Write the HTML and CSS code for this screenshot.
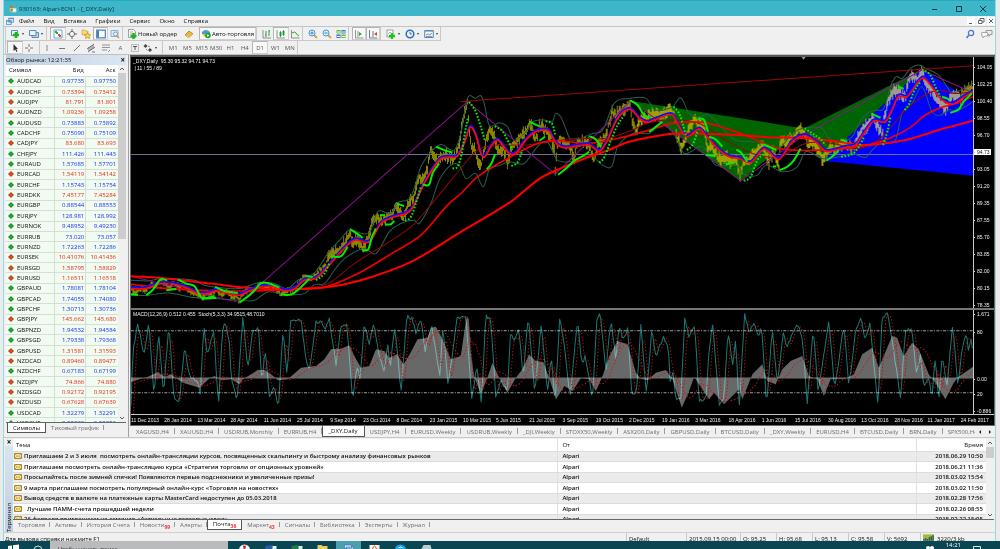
FILE: index.html
```html
<!DOCTYPE html>
<html lang="ru">
<head>
<meta charset="utf-8">
<title>930163: Alpari-ECN1 - [_DXY,Daily]</title>
<link rel="stylesheet" href="styles.css">
</head>
<body>
<svg class="defs" aria-hidden="true">
  <symbol id="mail" viewBox="0 0 8 6"><path d="M.5.5h7v5h-7z" fill="#f6e7a6" stroke="#a8842c"/><path d="M1 1l3 2.500 3-2.500M1 5l2-2M7 5l-2-2" fill="none" stroke="#b8963c" stroke-width=".7"/></symbol>
  <symbol id="app" viewBox="0 0 10 10"><path d="M1 2h4v6H1z" fill="#f0d060"/><path d="M3 4h6v5H3z" fill="#f4f8fb" stroke="#9bb" stroke-width=".6"/><path d="M1 1h4v3H1z" fill="#e06a30"/><path d="M2 5h3v3H2z" fill="#60b040"/></symbol>
  <symbol id="windows" viewBox="0 0 10 10"><path d="M3.500 1.500h6v5h-6zM.5 4.500h6v5h-6z" fill="#dcebf8" stroke="#4a88c0"/><path d="M3 2h7M0 5h7" stroke="#4a88c0"/></symbol>
</svg>
<div class="window">
  <header class="titlebar">
    <svg class="ico"><use href="#app"/></svg>
    <h1>930163: Alpari-ECN1 - [_DXY,Daily]</h1>
    <div class="caption">
      <button aria-label="Свернуть"><svg viewBox="0 0 8 8"><path d="M1 4.500h5"/></svg></button>
      <button aria-label="Развернуть"><svg viewBox="0 0 8 8"><path d="M1.500 1.500h5v5h-5z"/></svg></button>
      <button aria-label="Закрыть"><svg viewBox="0 0 8 8"><path d="M1 1l6 6M7 1l-6 6"/></svg></button>
    </div>
  </header>
  <nav class="menu">
    <svg class="ico"><use href="#windows"/></svg>
    <button>Файл</button><button>Вид</button><button>Вставка</button><button>Графики</button><button>Сервис</button><button>Окно</button><button>Справка</button>
    <div class="mdi">
      <button aria-label="Свернуть окно"><svg viewBox="0 0 8 8"><path d="M2 6.500h3"/></svg></button>
      <button aria-label="Восстановить окно"><svg viewBox="0 0 8 8"><path d="M3 3V1.500h4V5H5M1.500 3.500h3.500v3H1.500z"/></svg></button>
      <button aria-label="Закрыть окно"><svg viewBox="0 0 8 8"><path d="M2 2l4 4M6 2l-4 4"/></svg></button>
    </div>
  </nav>

  <div class="toolbars">
    <div class="bar bar-main">
      <div class="group g-file">
        <button aria-label="Новый график" class="drop"><svg viewBox="0 0 10 10"><path d="M1.500 1.500h6v5h-6z" fill="#e8f1f8" stroke="#5a8cb8"/><path d="M6 3v6M3 6h6" stroke="#18b818" stroke-width="2.600"/></svg></button>
        <button aria-label="Профили" class="drop"><svg viewBox="0 0 10 10"><path d="M3 3.500h6.500v5H3z" fill="#b9d3ea" stroke="#5a8cb8"/><path d="M.5 1.500h6.500v5H.5z" fill="#e8f1f8" stroke="#5a8cb8"/></svg></button>
      </div>
      <div class="group g-views">
        <button aria-label="Обзор рынка" class="on"><svg viewBox="0 0 10 10"><path d="M1 1h8v8H1z" fill="#fff" stroke="#6aa7dc"/><path d="M3 2l2 2-1 1-2-2z" fill="#20b030" stroke="#20b030"/><path d="M6 5l2 2-1 1-2-2z" fill="#e05020" stroke="#e05020"/></svg></button>
        <button aria-label="Окно данных"><svg viewBox="0 0 10 10"><circle cx="5" cy="5" r="2.600" fill="#f4f4f4" stroke="#777"/><path d="M5 0v3M5 7v3M0 5h3M7 5h3" stroke="#666"/></svg></button>
        <button aria-label="Навигатор"><svg viewBox="0 0 10 10"><path d="M1 1h3l1 1h2v4H1z" fill="#f8d878" stroke="#c89830" stroke-width=".6"/><path d="M6.500 3.500l1 2 2.200.3-1.600 1.500.4 2.200-2-1-2 1 .4-2.200-1.600-1.500 2.200-.3z" fill="#ffd83a" stroke="#b08010" stroke-width=".6"/></svg></button>
        <button aria-label="Терминал" class="on"><svg viewBox="0 0 10 10"><path d="M.7 1.200h8.600v7.600H.7z" fill="#fff" stroke="#4a80bc" stroke-width="1.200"/><path d="M1 1.500h2v7H1z" fill="#4a80bc"/></svg></button>
        <button aria-label="Тестер стратегий"><svg viewBox="0 0 10 10"><path d="M1 1.500h7v6H1z" fill="#dceaf5" stroke="#8fb0cc"/><circle cx="5.500" cy="5" r="2" fill="#eef6ff" stroke="#5a8cb8" stroke-width=".8"/><path d="M7 7l2 2" stroke="#d09828" stroke-width="1.500"/></svg></button>
      </div>
      <div class="group g-order">
        <button class="wide"><svg viewBox="0 0 10 10"><path d="M1.500.5h5l2 2v6h-7z" fill="#fff" stroke="#888" stroke-width=".8"/><path d="M3 3h3M3 5h2" stroke="#888" stroke-width=".7"/><path d="M6.500 4v6M3.500 7h6" stroke="#18b818" stroke-width="2.400"/></svg>Новый ордер</button>
        <button aria-label="MetaEditor"><svg viewBox="0 0 10 10"><path d="M1 6l4-4 4 3-4 4z" fill="#e8b840" stroke="#a87818" stroke-width=".8"/><path d="M1.500 6.500L5 9l4-3.500" stroke="#fff0b0" stroke-width=".7" fill="none"/></svg></button>
        <button class="wide on"><svg viewBox="0 0 10 10"><path d="M1 3q4-4 8 0v2H1z" fill="#4a98d8"/><path d="M1 5h8L5 9z" fill="#e8b840"/><circle cx="7" cy="6.500" r="2.800" fill="#18a828"/><path d="M6.200 5l2.200 1.500L6.200 8z" fill="#fff"/></svg>Авто-торговля</button>
      </div>
      <div class="group g-type">
        <button aria-label="Бары"><svg viewBox="0 0 10 10"><path d="M1 1v8h8" fill="none" stroke="#777" stroke-width=".8"/><path d="M4 2v6M3 6h1M7 1v6M7 2h1" stroke="#28a038"/></svg></button>
        <button aria-label="Японские свечи" class="on"><svg viewBox="0 0 10 10"><path d="M1 1v8h8" fill="none" stroke="#777" stroke-width=".8"/><path d="M3.500 3h2v4h-2zM6.500 2h2v4h-2z" fill="#28b838"/><path d="M4.500 2v6M7.500 1v6" stroke="#188028" stroke-width=".7"/></svg></button>
        <button aria-label="Линия"><svg viewBox="0 0 10 10"><path d="M1.500 1v8h8" fill="none" stroke="#777" stroke-width=".8"/><path d="M2 4q3-2 4 0t3 3" fill="none" stroke="#28a038"/></svg></button>
      </div>
      <div class="group g-zoom">
        <button aria-label="Увеличить"><svg viewBox="0 0 10 10"><path d="M6 6l3 3" stroke="#d8a830" stroke-width="2"/><circle cx="4" cy="4" r="3" fill="#d8ecfa" stroke="#4898d0"/><path d="M4 2.500v3M2.500 4h3" stroke="#2868a8" stroke-width=".8"/></svg></button>
        <button aria-label="Уменьшить"><svg viewBox="0 0 10 10"><path d="M6 6l3 3" stroke="#d8a830" stroke-width="2"/><circle cx="4" cy="4" r="3" fill="#d8ecfa" stroke="#4898d0"/><path d="M2.500 4h3" stroke="#2868a8" stroke-width=".8"/></svg></button>
        <button aria-label="Расположить окна"><svg viewBox="0 0 10 10"><path d="M.5 1h4v3.500h-4zM5.500 5.500h4V9h-4z" fill="#68b838"/><path d="M5.500 1h4v3.500h-4zM.5 5.500h4V9h-4z" fill="#3878c8"/><path d="M1 3h3M6 3h3M1 7.500h3M6 7.500h3" stroke="#fff"/></svg></button>
      </div>
      <div class="group g-shift">
        <button aria-label="Автопрокрутка" class="on"><svg viewBox="0 0 10 10"><path d="M1.500 1v8h8M4 2v6" fill="none" stroke="#777" stroke-width=".8"/><path d="M5 3l3 2-3 2z" fill="#28b038"/></svg></button>
        <button aria-label="Сдвиг графика" class="on"><svg viewBox="0 0 10 10"><path d="M1.500 1v8h8M5 2v6" fill="none" stroke="#607080" stroke-width=".9"/><path d="M9 3L6 5l3 2z" fill="#d05028"/></svg></button>
      </div>
      <div class="group g-ind">
        <button aria-label="Индикаторы" class="drop"><svg viewBox="0 0 10 10"><path d="M1 1h6v7H1z" fill="#fff" stroke="#888" stroke-width=".8"/><path d="M2 5l2-2 2 2" fill="none" stroke="#888" stroke-width=".7"/><path d="M6 4v6M3 7h6" stroke="#18c818" stroke-width="2.400"/></svg></button>
        <button aria-label="Периоды" class="drop"><svg viewBox="0 0 10 10"><circle cx="5" cy="5" r="3.800" fill="#e8f2fc" stroke="#2870b8" stroke-width="1.500"/><path d="M5 3v2h2" fill="none" stroke="#555" stroke-width=".8"/></svg></button>
        <button aria-label="Шаблоны" class="drop"><svg viewBox="0 0 10 10"><path d="M.7 1.500h8.600v7H.7z" fill="#eef4f8" stroke="#5888b0"/><path d="M1 2h8" stroke="#5888b0"/><path d="M2 6l2-1 2 1 2-2M2 7.500h6" fill="none" stroke="#669" stroke-width=".7"/></svg></button>
      </div>
      <div class="tools-right">
        <button aria-label="Поиск"><svg viewBox="0 0 10 10"><circle cx="6" cy="4" r="2.600" fill="none" stroke="#4878d0" stroke-width="1.300"/><path d="M4 6L1.500 9" stroke="#4878d0" stroke-width="1.500"/></svg></button>
        <button aria-label="Сообщения"><svg viewBox="0 0 12 10"><path d="M5 1.500h6v4H9l-1 2V5.500H5z" fill="#eee" stroke="#999"/><path d="M.7 3.500h6v3.500H4l-2 2V7H.7z" fill="#f8f8f8" stroke="#999" stroke-width=".8"/></svg></button>
      </div>
    </div>
    <div class="bar bar-lines">
      <div class="group g-cursor">
        <button aria-label="Курсор" class="on"><svg viewBox="0 0 10 10"><path d="M3.500 1v7l1.700-1.600L6.500 9l1-.6-1.200-2.400H8z" fill="#333"/></svg></button>
        <button aria-label="Перекрестие"><svg viewBox="0 0 10 10"><path d="M5 1v3M5 6v3M1 5h3M6 5h3" stroke="#777"/></svg></button>
      </div>
      <div class="group g-draw">
        <button aria-label="Вертикальная линия"><svg viewBox="0 0 10 10"><path d="M5 2v6" stroke="#888"/></svg></button>
        <button aria-label="Горизонтальная линия"><svg viewBox="0 0 10 10"><path d="M2 5.500h6" stroke="#777"/></svg></button>
        <button aria-label="Трендовая линия"><svg viewBox="0 0 10 10"><path d="M2 8l6-6" stroke="#777"/></svg></button>
        <button aria-label="Канал"><svg viewBox="0 0 10 10"><path d="M1 6l7-5M2 9l7-5M3 4v4M5 3v4M7 2v4M6 9h3" stroke="#666" stroke-width=".9"/></svg></button>
        <button aria-label="Фибоначчи"><svg viewBox="0 0 10 10"><path d="M1 2h8M1 4.500h8M1 7h5M7 9l2-2" stroke="#888" stroke-width=".9"/></svg></button>
        <button>A</button>
        <button aria-label="Метка"><svg viewBox="0 0 10 10"><path d="M1.500 1.500h7v7h-7z" fill="none" stroke="#888" stroke-dasharray="1 1"/><path d="M3 3.500h4M5 3.500V7" stroke="#555"/></svg></button>
        <button aria-label="Стрелки" class="drop"><svg viewBox="0 0 10 10"><path d="M2.500 1l2 2-2 2-2-2zM7 5l2 2-2 2-2-2z" fill="#444"/><path d="M3 6l1.500 1.500M5 3l2 1" stroke="#666" stroke-width=".8"/></svg></button>
      </div>
      <div class="group g-tf">
        <button>M1</button><button>M5</button><button>M15</button><button>M30</button><button>H1</button><button>H4</button><button class="on">D1</button><button>W1</button><button>MN</button>
      </div>
    </div>
  </div>

  <main class="work">
    <section class="market">
      <div class="panel-head"><h2>Обзор рынка: 12:21:35</h2><button aria-label="Закрыть">×</button></div>
      <div class="market-body">
        <div class="market-list">
          <table>
            <thead><tr><th>Символ</th><th>Бид</th><th>Аск</th></tr></thead>
            <tbody id="quotes"></tbody>
          </table>
        </div>
        <div class="scroll"><svg viewBox="0 0 6 4"><path d="M1 3l2-2 2 2"/></svg><i></i><svg viewBox="0 0 6 4"><path d="M1 1l2 2 2-2"/></svg></div>
      </div>
      <div class="tabs market-tabs"><button class="cur">Символы</button><button>Тиковый график</button></div>
    </section>

    <section class="charts">
      <div class="chart">
        <div class="pane price">
          <div class="plot">
            <svg id="price" viewBox="9 21 2530 753" preserveAspectRatio="none"></svg>
            <p class="legend">_DXY,Daily&nbsp; 95.30 95.32 94.71 94.73<br>&nbsp;| 11 / 55 / 89</p>
          </div>
          <ol class="scale"><li>104.05</li><li>102.25</li><li>100.40</li><li>98.55</li><li>96.70</li><li class="now">94.73</li><li>93.05</li><li>91.20</li><li>89.35</li><li>87.55</li><li>85.70</li><li>83.85</li><li>82.00</li><li>80.15</li><li>78.35</li></ol>
        </div>
        <div class="pane osc">
          <div class="plot">
            <svg id="osc" viewBox="9 32 2530 311" preserveAspectRatio="none"></svg>
            <p class="legend">MACD(12,26,9) 0.512 0.455&nbsp; Stoch(5,3,3) 34.9515,48.7010</p>
          </div>
          <ol class="scale osc-scale"><li>1.671</li><li>80</li><li>0.00</li><li>20</li><li>-0.886</li></ol>
        </div>
        <ol class="dates"><li>11 Dec 2013</li><li>28 Jan 2014</li><li>13 Mar 2014</li><li>28 Apr 2014</li><li>11 Jun 2014</li><li>25 Jul 2014</li><li>9 Sep 2014</li><li>23 Oct 2014</li><li>8 Dec 2014</li><li>23 Jan 2015</li><li>10 Mar 2015</li><li>5 Jun 2015</li><li>21 Jul 2015</li><li>3 Sep 2015</li><li>19 Oct 2015</li><li>2 Dec 2015</li><li>19 Jan 2016</li><li>3 Mar 2016</li><li>18 Apr 2016</li><li>1 Jun 2016</li><li>15 Jul 2016</li><li>30 Aug 2016</li><li>13 Oct 2016</li><li>28 Nov 2016</li><li>11 Jan 2017</li><li>24 Feb 2017</li></ol>
      </div>
      <div class="tabs chart-tabs">
        <div class="strip"><button>XAGUSD,H4</button><button>XAUUSD,H4</button><button>USDRUB,Monthly</button><button>EURRUB,H4</button><button class="cur">_DXY,Daily</button><button>USDJPY,H4</button><button>EURUSD,Weekly</button><button>USDRUB,Weekly</button><button>_DJI,Weekly</button><button>STOXX50,Weekly</button><button>ASX200,Daily</button><button>GBPUSD,Daily</button><button>BTCUSD,Daily</button><button>_DXY,Weekly</button><button>EURUSD,H4</button><button>BTCUSD,Daily</button><button>BRN,Daily</button><button>SPX500,H4</button></div>
        <div class="arrows"><button aria-label="Назад"><svg viewBox="0 0 6 6"><path d="M4 1v4L2 3z"/></svg></button><button aria-label="Вперёд"><svg viewBox="0 0 6 6"><path d="M2 1v4l2-2z"/></svg></button></div>
      </div>
    </section>
  </main>

  <section class="terminal">
    <div class="side"><button aria-label="Закрыть">×</button><h2>Терминал</h2></div>
    <div class="term-main">
      <div class="mail">
        <div class="mail-list">
          <table>
            <thead><tr><th class="c-subj">Тема</th><th class="c-from">От</th><th class="c-time">Время</th></tr></thead>
            <tbody id="letters"></tbody>
          </table>
        </div>
        <div class="scroll"><svg viewBox="0 0 6 4"><path d="M1 3l2-2 2 2"/></svg><i></i><svg viewBox="0 0 6 4"><path d="M1 1l2 2 2-2"/></svg></div>
      </div>
      <div class="tabs term-tabs"><button>Торговля</button><button>Активы</button><button>История Счета</button><button>Новости<sub>99</sub></button><button>Алерты</button><button class="cur">Почта<sub>36</sub></button><button>Маркет<sub>43</sub></button><button>Сигналы</button><button>Библиотека</button><button>Эксперты</button><button>Журнал</button></div>
    </div>
  </section>

  <footer class="status">
    <span class="hint">Для вызова справки нажмите F1</span>
    <span class="s-prof">Default</span><span class="s-date">2015.09.15 00:00</span><span>O: 95.25</span><span>H: 95.68</span><span>L: 95.13</span><span>C: 95.58</span><span>V: 5692</span>
    <span class="s-net"><svg viewBox="0 0 12 8"><path d="M0 0h12v8H0z" fill="#a8b838"/><path d="M1 7V5M3 7V4M5 7V5M7 7V3M9 7V2M11 7V1" stroke="#285868" stroke-width="1.500"/></svg>3220/3 kb</span>
  </footer>
</div>
<footer class="taskbar">
  <svg class="t-start" viewBox="0 0 12 8"><path d="M1 5l4-.6V8H1zM6 4.200l6-.8V8H6z" fill="#fff"/></svg>
  <svg class="t-start" viewBox="0 0 12 8"><circle cx="6" cy="9" r="4" fill="none" stroke="#cdd"/></svg>
  <label class="t-search"><input type="text" aria-label="Поиск" value="Чтобы начать поиск"></label>
  <div class="t-apps">
    <svg viewBox="0 0 12 8"><circle cx="6" cy="9" r="5.500" fill="#f4f4f4"/><path d="M5 5l1 4 1-4z" fill="#d22" stroke="#d22"/></svg>
    <svg viewBox="0 0 12 8"><path d="M1 5l7-1v4H1z" fill="#2858a8"/><path d="M8 5h4v3H8z" fill="#e8eef8"/></svg>
    <svg viewBox="0 0 12 8"><path d="M1 5l7-1v4H1z" fill="#1f7a44"/><path d="M8 5h4v3H8z" fill="#d8eedd"/></svg>
    <svg viewBox="0 0 12 8"><path d="M1 4h4l1 1h5v3H1z" fill="#f0cc60"/></svg>
    <svg class="act" viewBox="0 0 12 8"><path d="M2 4h7v3H2zM4 6h7v2H4z" fill="#e4eef8" stroke="#3a78b8" stroke-width=".7"/></svg>
    <svg viewBox="0 0 12 8"><path d="M1 4h10v4H1z" fill="#f8f0ea"/><path d="M4 8q2-6 4 0" fill="none" stroke="#e05020"/></svg>
    <svg viewBox="0 0 12 8"><circle cx="6" cy="9" r="5.500" fill="#18a8e8"/><path d="M4 7q2-2 4 0" stroke="#fff" fill="none"/></svg>
    <svg viewBox="0 0 12 8"><path d="M3 4h7l1 4H1z" fill="#b8ccd4"/></svg>
  </div>
  <div class="t-tray"><svg viewBox="0 0 12 8"><circle cx="4" cy="7" r="2" fill="#fff"/><circle cx="8" cy="7" r="2" fill="#fff"/></svg><time>14:21</time><svg viewBox="0 0 12 8"><path d="M2.500 5.500h7V9h-7z" fill="none" stroke="#dee"/></svg></div>
</footer>
<script src="app.js"></script>
</body>
</html>
```
FILE: styles.css
```css
*, *::before, *::after { box-sizing: border-box; }
body { margin: 0; height: 100vh; display: flex; flex-direction: column; overflow: hidden; background: #ebebeb; color: #0c0c0c; font: 6px/8px "Open Sans", "Noto Sans", sans-serif; }
h1, h2, p, ol { margin: 0; padding: 0; font: inherit; list-style: none; }
button { margin: 0; padding: 0; border: 0; background: none; font: inherit; color: inherit; white-space: nowrap; }
svg { display: block; }
table { border-collapse: collapse; table-layout: fixed; width: 100%; }
th, td { padding: 0; font-weight: 400; text-align: left; white-space: nowrap; overflow: hidden; }
.defs { position: absolute; width: 0; height: 0; }

.window { flex: 1; min-height: 0; margin: 0 4px 0 3px; display: flex; flex-direction: column; background: #f0f0f0; border: solid #8edbe6; border-width: 0 1px; }
.ico { width: 8px; height: 8px; }

.titlebar { display: flex; align-items: center; height: 16px; padding-left: 5px; gap: 2px; background: #3cb6c8; border-top: 1px solid #27aabd; color: #0c333a; }
.caption { display: flex; margin-left: auto; }
.caption button { width: 24px; display: flex; justify-content: center; }
.caption svg { width: 8px; height: 8px; fill: none; stroke: #123c44; stroke-width: 1; }

.menu { display: flex; align-items: center; height: 11px; padding-left: 2px; gap: 9px; border-bottom: 1px solid #c4c4c4; }
.menu .ico { margin-right: -4px; }
.mdi { display: flex; gap: 2px; margin-left: auto; }
.mdi button { width: 8px; height: 8px; background: #fff; }
.mdi svg { width: 8px; height: 8px; fill: none; stroke: #567; }

.toolbars { border-bottom: 1px solid #c0c0c0; height: 28px; }
.bar { display: flex; height: 14px; align-items: stretch; }
.bar-lines { height: 13px; }
.group { display: flex; align-items: stretch; padding-left: 3px; border-left: 1px solid #c8c8c8; }
.group button { flex: 1; min-width: 0; display: flex; align-items: center; justify-content: center; color: #555; }
.group button.on { background: #f8f8f8; border: 1px solid #d0d0d0; border-top-color: #b4b4b4; border-left-color: #b4b4b4; }
.group svg, .tools-right svg { width: 10px; height: 10px; flex: none; }
.group .drop::after { content: ""; margin-left: 2px; border: solid transparent; border-top-color: #333; border-width: 2px 1px 0; }
.group button.wide { flex: none; gap: 1px; color: #111; padding: 0 1px; }
.g-file { width: 41px; }
.g-views { width: 76px; }
.g-order { width: 134px; }
.g-type { width: 46px; }
.g-zoom { width: 46px; }
.g-shift { width: 32px; }
.g-ind { width: 61px; border-right: 1px solid #c8c8c8; }
.bar-main .group { border-bottom: 1px solid #c8c8c8; }
.group:first-child { margin-left: 1px; padding-left: 1px; }
.tools-right { display: flex; gap: 6px; align-items: center; margin-left: auto; padding-right: 2px; }
.tools-right button:last-child svg { width: 12px; }
.bar-lines .g-cursor { width: 34px; padding-right: 3px; }
.bar-lines .g-draw { width: 123px; padding: 0 5px 0 0; }
.g-tf { width: 136px; border-right: 1px solid #c8c8c8; }

.work { flex: 1; min-height: 0; display: flex; }
.market { width: 125px; display: flex; flex-direction: column; border-right: 1px solid #a0a0a0; padding: 0 2px 4px 2px; }
.panel-head { display: flex; align-items: center; height: 10px; justify-content: space-between; background: linear-gradient(90deg, #bfd0e2, #dbe6f2); }
.panel-head button { font-size: 8px; font-weight: 700; padding: 0 1px; }
.market-body { flex: 1; min-height: 0; display: flex; background: #fff; }
.market-list { flex: 1; overflow: hidden; height: 100%; }
.market-list table { height: 364px; }
.market-list th { height: 11px; padding: 0 2px 0 3px; }
.market-list th:first-child { width: 48px; }
.market-list th + th, .market-list td + td { text-align: right; }
.market-list tbody tr { background: #effcef; }
.market-list td { padding: 0 1px 0 3px; border: 1px solid #d8ddd8; border-left: 0; }
.market-list td:last-child { border-right-color: #effcef; }
.sym::before { content: ""; display: inline-block; width: 4px; height: 4px; margin-right: 4px; transform: rotate(45deg); background: #2fae3c; border: 1px solid #1c8a2c; }
.down .sym::before { background: #e0582c; border-color: #b8401c; }
.up td + td { color: #1c2cff; }
.down td + td { color: #f02418; }
.scroll { width: 8px; display: flex; flex-direction: column; align-items: center; background: #f0f0f0; padding: 2px 0; }
.scroll svg { width: 6px; height: 4px; fill: none; stroke: #555; }
.scroll i { width: 8px; margin: 2px 0 auto; height: 47%; background: #cdcdcd; }

.tabs { display: flex; align-items: stretch; color: #6c6c6c; }
.tabs button { padding: 0 5px; position: relative; }
.tabs button:not(.cur)::after { content: ""; position: absolute; right: 0; top: 2px; bottom: 3px; border-right: 1px solid #999; }
.tabs .cur { background: #fff; color: #111; border: 1px solid #555; border-top: 0; }
.market-tabs { height: 11px; border-top: 1px solid #666; }
.market-tabs .cur { margin-left: 1px; }

.charts { flex: 1; min-width: 0; display: flex; flex-direction: column; padding-left: 1px; }
.chart { flex: 1; min-height: 0; display: flex; flex-direction: column; background: #000; color: #f0f0f0; border: 1px solid #6a6a6a; border-top: 2px solid #555; font: 5px/6px "Liberation Sans", sans-serif; }
.pane { display: flex; min-height: 0; }
.price { flex: 252; border-bottom: 2px solid #777; }
.osc { flex: 104; }
.plot { flex: 1; min-width: 0; position: relative; border-right: 1px solid #c8c8c8; }
.plot svg { position: absolute; width: 100%; height: 100%; inset: 0; }
.legend { position: absolute; left: 2px; top: 1px; line-height: 7px; }
.scale { width: 20px; display: flex; flex-direction: column; justify-content: space-between; padding: 7px 0 0; }
.scale li { height: 6px; padding-left: 3px; position: relative; }
.scale li::before { content: ""; position: absolute; left: -1px; top: 3px; width: 2px; border-top: 1px solid #c8c8c8; }
.scale .now { background: #fff; color: #111; margin-right: 3px; }
.osc-scale { display: grid; grid-template-rows: 18px 47px 15px 1fr auto; padding: 1px 0 0; }
.dates { display: grid; grid-template-columns: repeat(26, 1fr); height: 11px; padding-top: 2px; border-top: 1px solid #c8c8c8; }
.dates li { white-space: nowrap; position: relative; }
.chart-tabs { height: 11px; }
.strip { flex: 1; min-width: 0; display: flex; overflow: hidden; padding-left: 1px; }
.strip button { flex: none; padding: 0 6px 0 5px; }
.arrows { display: flex; }
.arrows button { padding: 0 2px; }
.arrows button::after { display: none; }
.arrows svg { width: 6px; height: 6px; fill: #222; }

.terminal { height: 95px; display: flex; border-top: 1px solid #c8c8c8; }
.side { width: 8px; margin-left: 1px; display: flex; flex-direction: column; align-items: center; justify-content: space-between; background: linear-gradient(#dbe6f2, #bfd0e2); }
.side button { font-size: 8px; font-weight: 700; background: #f0f0f0; width: 8px; }
.side h2 { writing-mode: vertical-rl; transform: rotate(180deg); }
.term-main { flex: 1; min-width: 0; display: flex; flex-direction: column; padding: 1px 1px 0 0; }
.mail { height: 80px; display: flex; background: #fff; }
.mail-list { flex: 1; min-width: 0; overflow: hidden; }
.mail-list table { height: 86px; }
.mail-list th { height: 12px; border-bottom: 1px solid #ddd; }
.mail-list th + th, .mail-list td + td { border-left: 1px solid #e0e0e0; padding-left: 4px; }
.mail-list th:first-child { padding-left: 3px; }
.mail-list .c-subj { width: 56%; }
.c-time { width: 70px; }
.mail-list td { font-weight: 600; padding-left: 1px; border-bottom: 1px solid #dcdcdc; }
.mail-list td svg { display: inline-block; width: 8px; height: 6px; margin-right: 2px; vertical-align: -1px; }
.mail-list tbody tr:nth-child(odd) { background: #ebebeb; }
.mail-list th:last-child, .mail-list td:last-child { text-align: right; padding-right: 3px; }
.mail .scroll i { height: 11px; }
.term-tabs { height: 11px; border-top: 1px solid #666; }
.term-tabs sub { color: #f03030; font-size: 5px; font-weight: 700; line-height: 1; vertical-align: -2px; }

.status { display: flex; height: 9px; line-height: 12px; overflow: hidden; border-top: 1px solid #d0d0d0; }
.status span { width: 36px; padding-left: 2px; border-left: 1px solid #c8c8c8; white-space: nowrap; }
.status .hint { flex: 1; padding-left: 1px; border: 0; }
.status .s-prof { width: 60px; }
.status .s-date { width: 54px; }
.status .s-net { width: 75px; display: flex; gap: 3px; }
.s-net svg { width: 11px; height: 8px; margin-top: 1px; }

.taskbar { display: flex; height: 8px; background: #0a4652; color: #fff; overflow: hidden; }
.t-start { width: 12px; height: 8px; margin: 0 6px 0 7px; }
.t-search { width: 178px; background: #b9bbbd; }
.t-search input { width: 100%; height: 16px; border: 0; padding: 0 8px; background: none; font: inherit; color: #333; }
.t-apps { display: flex; gap: 1px; padding-left: 4px; }
.t-apps svg { width: 25px; height: 8px; }
.t-apps .act { background: #4aa0ac; }
.t-tray { display: flex; gap: 10px; margin-left: auto; padding-right: 17px; }
.t-tray svg { width: 12px; height: 8px; }

.wave { fill: none; stroke-linejoin: round; }
.glow { mix-blend-mode: screen; }
```
FILE: app.js
```js
const SVG = 'http://www.w3.org/2000/svg';

const quotes = `AUDCAD 0.97735 0.97750 +|AUDCHF 0.73394 0.73412 -|AUDJPY 81.791 81.801 -|AUDNZD 1.09236 1.09258 -|AUDUSD 0.73883 0.73892 +|CADCHF 0.75090 0.75109 +|CADJPY 83.680 83.693 -|CHFJPY 111.426 111.443 +|EURAUD 1.57685 1.57701 +|EURCAD 1.54119 1.54142 -|EURCHF 1.15743 1.15754 +|EURDKK 7.45177 7.45284 -|EURGBP 0.88544 0.88553 +|EURJPY 128.981 128.992 +|EURNOK 9.48952 9.49230 +|EURRUB 73.020 73.057 +|EURNZD 1.72263 1.72286 +|EURSEK 10.41076 10.41436 -|EURSGD 1.58795 1.58829 -|EURUSD 1.16511 1.16518 -|GBPAUD 1.78081 1.78104 +|GBPCAD 1.74055 1.74080 +|GBPCHF 1.30713 1.30736 +|GBPJPY 145.662 145.680 -|GBPNZD 1.94532 1.94584 +|GBPSGD 1.79338 1.79368 +|GBPUSD 1.31581 1.31593 -|NZDCAD 0.89460 0.89477 -|NZDCHF 0.67183 0.67199 +|NZDJPY 74.866 74.880 -|NZDSGD 0.92172 0.92195 -|NZDUSD 0.67628 0.67639 -|USDCAD 1.32279 1.32291 +|USDCHF 0.99330 0.99350 +`;
document.getElementById('quotes').innerHTML = quotes.split('|').map(q => {
  const [s, bid, ask, dir] = q.split(' ');
  return `<tr class="${dir === '+' ? 'up' : 'down'}"><td class="sym">${s}</td><td>${bid}</td><td>${ask}</td></tr>`;
}).join('');

const letters = [
  ['Приглашаем 2 и 3 июля&nbsp; посмотреть онлайн-трансляции курсов, посвященных скальпингу и быстрому анализу финансовых рынков', '2018.06.29 10:50'],
  ['Приглашаем посмотреть онлайн-трансляцию курса «Стратегия торговли от опционных уровней»', '2018.06.21 11:36'],
  ['Просыпайтесь после зимней спячки! Появляются первые подснежники и увеличенные призы!', '2018.03.02 15:54'],
  ['9 марта приглашаем посмотреть популярный онлайн-курс «Торговля на новостях»', '2018.03.02 11:50'],
  ['Вывод средств в валюте на платежные карты MasterCard недоступен до 05.03.2018', '2018.02.28 17:56'],
  ['&nbsp; Лучшие ПАММ-счета прошедшей недели', '2018.02.26 08:55'],
  ['26 февраля приглашаем на семинар «Актуальные торговые идеи»', '2018.02.22 15:05']
];
document.getElementById('letters').innerHTML = letters.map(([t, d]) =>
  `<tr><td><svg><use href="#mail"/></svg>${t}</td><td>Alpari</td><td>${d}</td></tr>`).join('');

/* Series are "x,y x,y ..."; the part after "/" is counted from the second screen of the chart. */
const SECOND = 1236;
function series(text) {
  return text.split('/').flatMap((part, i) =>
    part.trim().split(/\s+/).filter(Boolean).map(p => {
      const [x, y] = p.split(',').map(Number);
      return [x + i * SECOND, y];
    }));
}
let seed = 7;
const rnd = () => (seed = (seed * 16807) % 2147483647) / 2147483647;
function el(parent, tag, attrs) {
  const n = document.createElementNS(SVG, tag);
  for (const k in attrs) n.setAttribute(k, attrs[k]);
  parent.appendChild(n);
  return n;
}
const straight = p => 'M' + p.map(q => q.join(' ')).join('L');
function smooth(p) {
  let d = `M${p[0]}`;
  for (let i = 0; i < p.length - 1; i++) {
    const a = p[i - 1] || p[i], b = p[i], c = p[i + 1], e = p[i + 2] || c;
    const k = (c[0] - b[0]) / 3;
    const s1 = (c[1] - a[1]) / (c[0] - a[0] || 1), s2 = (e[1] - b[1]) / (e[0] - b[0] || 1);
    d += `C${b[0] + k} ${b[1] + s1 * k} ${c[0] - k} ${c[1] - s2 * k} ${c[0]} ${c[1]}`;
  }
  return d;
}
function at(p, x) {
  for (let i = 1; i < p.length; i++) if (x <= p[i][0]) {
    const t = (x - p[i - 1][0]) / (p[i][0] - p[i - 1][0] || 1);
    return p[i - 1][1] + t * (p[i][1] - p[i - 1][1]);
  }
  return p[p.length - 1][1];
}
const line = (root, d, color, w, extra = {}) => el(root, 'path', { d, stroke: color, 'stroke-width': w, class: 'wave', ...extra });

/* Price pane */
const price = document.getElementById('price');
el(price, 'path', { d: straight(series('/272,152 605,392 795,235')) + 'Z' + straight(series('/795,235 850,332 1150,58')) + 'Z', fill: '#006400' });
el(price, 'path', { d: straight(series('/850,332 1150,58 1303,155 1303,377')) + 'Z', fill: '#0000ff' });
line(price, 'M9 313H2540', '#6c7090', 3);

const mid = series(`9,715 20,728 40,712 55,720 70,700 85,708 97,690 115,700 125,712 140,698 155,712 170,705 180,720 195,728 210,735 222,742 235,728 250,732 265,715 280,735 295,725 310,735 325,742 335,752 345,728 360,720 375,722 390,708 400,700 415,712 430,705 445,716 460,730 475,722 490,720 505,710 520,688 535,678 550,684 565,672 580,655 595,645 605,610 620,604 640,602 652,575 665,545 675,580 690,565 705,590 720,570 735,510 750,502 765,515 780,498 795,500 805,465 815,478 830,500 845,450 858,445 865,405 875,380 890,385 900,360 908,300 920,320 935,335 950,315 965,320 980,325 990,300 1000,250 1010,190 1020,160 1023,200 1030,290 1042,300 1052,330 1060,350 1070,310 1078,260 1088,240 1098,250 1108,290 1118,300 1128,300 1140,335 1150,300 1165,280 1180,262 1195,245 1208,222 1220,255 1230,265
 / 0,225 10,230 25,250 35,260 45,300 48,365 55,280 70,270 85,285 105,320 115,275 130,275 150,285 162,330 175,285 185,275 200,255 210,220 218,185 235,190 250,180 265,165 275,160 278,220 292,240 305,210 320,205 340,190 355,195 370,190 390,180 405,190 412,260 425,290 440,260 455,220 465,210 480,220 495,235 505,300 515,285 530,310 545,330 560,320 575,335 590,320 603,380 612,340 625,330 640,320 655,295 670,285 680,310 690,335 702,310 720,350 725,265 740,285 755,265 770,255 783,240 795,245 805,280 820,275 835,290 845,320 855,325 870,290 885,300 900,290 915,285 930,290 945,295 955,270 970,240 985,225 1000,200 1012,225 1025,235 1030,270 1035,210 1050,150 1065,120 1085,130 1100,140 1110,90 1120,75 1135,90 1150,65 1165,105 1180,120 1195,150 1205,155 1220,175 1235,150 1250,130 1265,145 1280,115 1290,115 1303,110`);
const bars = { '#8a8400': '', '#a0a000': '', '#a09a90': '' };
for (let x = 9; x < 2539; x += 3) {
  const amp = x < 600 ? 9 : 17;
  const y = at(mid, x) + (rnd() - .5) * amp;
  const h = amp * (.4 + rnd() * .7);
  const r = x - SECOND;
  const c = r > 950 && r < 1265 ? '#a09a90' : r > 290 && r < 930 ? '#a0a000' : '#8a8400';
  bars[c] += `M${x} ${y - h}V${y + h}`;
}
for (const c in bars) line(price, bars[c], c, 3);

const upper = series(`9,690 60,692 100,685 200,690 230,705 330,715 390,698 440,700 480,715 510,690 560,668 600,610 640,565 665,540 725,548 750,485 790,490 810,458 850,440 880,350 910,305 940,283 980,300 1000,250 1020,145 1045,145 1060,137 1070,160 1085,225 1115,218 1140,230 1160,270 1200,240 1215,215 1250,210 1275,215 1285,190 1300,200 1315,235
 / 95,270 160,250 190,240 225,160 270,145 320,145 350,180 400,170 425,143 450,190 480,200 510,195 550,235 590,270 640,275 680,280 720,295 760,250 800,233 850,235 870,265 900,275 940,260 960,220 985,190 1010,180 1035,175 1055,110 1072,80 1090,85 1115,55 1140,45 1160,55 1200,75 1225,110 1240,130 1303,100`);
const lower = series(`9,735 60,735 120,728 200,742 260,745 335,750 380,750 420,725 470,732 530,730 560,703 590,700 620,660 650,625 710,595 745,610 785,545 820,520 860,510 875,520 910,460 935,390 970,345 995,345 1015,385 1045,370 1068,410 1085,360 1120,345 1145,335 1190,340 1230,290 1260,275 1290,330
 / 104,332 130,320 160,320 190,345 218,348 235,290 280,250 330,250 370,220 410,260 435,310 490,290 530,345 590,345 620,375 655,375 680,345 730,365 775,350 800,305 850,325 900,320 940,310 980,322 1000,300 1030,275 1070,270 1090,190 1120,160 1150,110 1180,185 1205,195 1230,180 1260,180 1303,155`);
line(price, smooth(upper), '#27614d', 3);
line(price, smooth(lower), '#27614d', 3);
line(price, straight(series('9,678 335,757 1020,155 1284,372 / 275,152 605,392 795,255 1150,60 1303,128')), '#8c1090', 3);
line(price, straight(series('1000,155 1060,150 / 1303,47')), '#9a0808', 3);
line(price, smooth(series('520,715 600,700 680,640 850,530 930,440 1000,355 1050,300 1110,285 1200,285 / 100,265 200,265 280,240 330,217 400,210 480,220 560,270 640,310 720,320 800,280 880,280 960,295 1030,260 1100,180 1150,140 1200,120 1250,130 1303,125')), '#900808', 3);
line(price, smooth(series('9,702 120,715 300,722 450,720 540,715 600,708 700,665 800,605 880,555 960,465 1000,430 1050,380 1150,320 1230,280 / 54,272 90,275 150,280 250,262 330,240 400,220 490,217 560,235 630,260 700,290 760,300 850,300 960,290 1050,265 1110,235 1160,195 1200,175 1250,160 1303,140')), '#f00000', 5);
line(price, smooth(series('9,678 100,683 250,700 350,712 450,717 590,712 700,690 850,635 1000,545 1150,455 / 0,386 75,350 150,320 200,303 270,275 380,253 440,250 600,255 700,262 780,263 900,275 980,285 1100,270 1200,240 1303,212')), '#ff0000', 6);

const fast = series(`9,715 50,716 100,700 150,705 180,715 210,730 240,730 265,722 300,730 335,735 370,720 400,710 440,710 470,722 500,716 530,690 565,684 600,650 640,605 680,570 725,575 760,520 800,500 850,480 890,400 935,330 960,322 990,318 1010,280 1028,232 1045,255 1060,310 1072,320 1090,290 1110,270 1125,285 1145,310 1165,310 1195,270 1225,245
 / 12,240 30,245 50,280 75,293 115,288 150,285 180,303 200,280 235,205 272,178 300,205 322,217 350,208 400,195 420,230 443,260 480,237 500,255 540,300 570,320 600,325 635,338 675,297 720,328 760,275 795,257 830,275 860,303 890,300 920,292 950,285 975,250 1005,213 1040,215 1060,180 1078,140 1105,140 1150,85 1175,105 1205,145 1240,163 1270,145 1303,125`);
line(price, smooth(fast.map(([x, y]) => [x, y - 5])), '#1010f0', 6);
line(price, smooth(fast), '#ff0808', 5);

const sar = [
  '9,732 30,734', '55,735 75,718 97,688 118,690', '115,720 145,716', '150,688 175,700 200,708 222,742 260,738', '262,710 290,722 330,728', '222,745 265,743', '335,757 365,735 385,715 400,698 425,700 455,712', '460,733 490,733 515,715 545,685', '535,677 555,680', '565,690 590,670 605,640', '610,618 640,618 660,590', '667,537 685,548 705,563', '705,600 722,597 733,560 745,535', '757,495 772,495', '772,523 790,522 800,512', '808,460 830,468', '832,512 850,500 865,460 880,410', '885,403 905,403 915,370 935,340', '926,290 950,300 975,307', '975,355 990,350 1003,310 1012,250 1022,200', '1025,155 1045,185 1060,230 1072,270', '1078,358 1092,340 1103,312', '1102,228 1125,243 1143,275 1155,300', '1152,348 1172,335 1185,300', '1208,216 1235,228', '1236,272 1253,260', '1255,213 1275,222 1284,255',
  '/56,374 80,355 105,332 130,318 150,305', '/150,258 170,268 185,290', '/180,338 195,322 215,270 235,225 255,195', '/272,151 295,165 315,195 335,203', '/330,246 350,230 370,215', '/403,170 420,190 432,225 440,255', '/443,300 460,285 475,245', '/475,206 495,210 507,245', '/510,260 530,268 550,290', '/500,315 530,318', '/560,343 585,338', '/592,298 608,310 625,335', '/614,392 635,380 655,330 675,312', '/672,282 695,292 712,300', '/702,349 712,349', '/722,360 745,350 765,330 785,295', '/797,235 820,250 845,268 860,285', '/862,332 885,315 900,300', '/905,268 925,275', '/907,320 940,312 960,290 975,262', '/1000,192 1025,203', '/1033,285 1047,240 1055,200', '/1078,110 1095,116', '/1098,180 1112,160 1125,125 1145,95', '/1150,58 1175,75 1190,110 1205,140', '/1210,140 1232,148', '/1235,188 1260,178 1275,155 1300,130'
];
const dotted = new Set([9, 16, 19, 20, 22, 23, 26, 29, 32, 33, 39, 43, 46, 48, 50, 51]);
sar.forEach((s, i) => line(price, smooth(series(s)), '#00f000', 6, dotted.has(i) ? { 'stroke-dasharray': '5 5' } : {}));
el(price, 'path', { d: 'M2024 21h12l-6 8z', fill: '#8a9ab0' });

/* Oscillator pane */
const osc = document.getElementById('osc');
line(osc, 'M9 94H2540M9 280H2540', '#a0a0a0', 3, { 'stroke-dasharray': '9 4 3 4' });
const macd = series(`9,248 35,240 60,232 90,218 110,232 130,225 145,237 165,250 215,265 245,237 260,230 280,243 310,240 335,255 345,240 390,212 410,212 430,225 450,243 480,240 520,205 565,200 590,180 610,150 640,148 665,138 680,170 700,205 725,200 745,150 770,155 785,175 808,165 828,195 845,168 870,120 900,115 912,85 925,82 945,120 970,180 1000,170 1010,100 1018,50 1024,60 1030,160 1040,230 1060,285 1080,235 1095,190 1110,225 1140,280 1165,236 1185,210 1205,165 1225,185
 / 12,188 29,235 50,300 75,260 100,275 125,236 150,240 170,275 190,230 210,170 235,125 265,135 290,220 305,238 325,243 350,220 380,212 400,240 428,325 450,275 465,233 510,300 525,280 555,315 600,270 610,300 640,225 670,195 685,245 710,255 730,210 755,185 790,170 810,230 835,240 855,290 875,240 920,238 945,225 970,165 1000,145 1020,205 1060,110 1075,115 1095,170 1120,130 1140,150 1170,225 1190,250 1220,300 1245,250 1260,232 1303,202`);
el(osc, 'path', { d: `M9 236L${macd.map(q => q.join(' ')).join('L')}L2539 236Z`, fill: '#686868' });
line(osc, 'M9 236H2540', '#707070', 3);

const peaks = series(`9,320 15,150 30,75 48,170 63,68 78,290 92,100 107,280 123,75 138,300 155,300 170,140 185,230 205,240 217,280 228,80 238,165 258,95 272,325 283,100 292,68 305,130 310,240 328,300 345,50 360,210 375,90 392,90 403,260 411,145 425,290 438,260 452,320 466,90 478,230 488,70 520,60 535,185 545,210 565,70 580,65 590,90 605,60 625,195 640,75 658,80 675,300 688,200 697,240 710,75 725,130 738,70 755,170 770,215 780,130 787,210 802,80 820,280 838,50 855,60 865,100 880,60 893,155 912,80 937,225 946,80 962,260 988,60 1015,48 1033,300 1048,200 1062,310 1075,50 1090,60 1105,290 1120,240 1140,280 1150,90 1160,130 1175,90 1187,240 1203,45 1222,285
 / 6,75 24,280 36,170 47,315 61,60 75,130 92,300 115,60 128,195 138,170 160,300 173,60 183,45 200,215 215,60 230,180 240,80 250,120 265,90 278,285 292,280 305,75 322,285 338,90 350,170 373,110 388,150 393,250 402,210 410,300 425,300 437,60 450,115 467,75 480,300 500,300 508,180 520,65 540,315 555,300 567,90 580,200 590,120 600,330 617,45 630,100 645,70 658,110 668,85 683,320 700,90 715,255 733,100 745,145 758,105 775,75 790,115 805,310 823,85 838,285 870,60 887,270 915,75 930,260 950,100 967,55 978,120 993,75 1018,320 1030,50 1048,45 1070,190 1085,300 1100,95 1120,90 1132,220 1145,170 1155,260 1170,240 1180,290 1190,170 1200,310 1210,170 1225,260 1242,70 1258,260 1270,150 1283,95 1290,160 1297,115 1303,155`);
const stoch = [], signal = [], macdSignal = [];
for (let x = 9; x < 2539; x += 4) {
  stoch.push([x, at(peaks, x) + (rnd() - .5) * 12]);
  signal.push([x, (at(peaks, x - 4) + at(peaks, x - 9) + at(peaks, x - 13)) / 3]);
  macdSignal.push([x, (at(macd, x - 6) + at(macd, x - 22) + at(macd, x - 38)) / 3]);
}
line(osc, straight(stoch), '#187a76', 3, { class: 'wave glow' });
line(osc, straight(signal), '#b81414', 3, { 'stroke-dasharray': '4 6' });
line(osc, straight(macdSignal), '#c81818', 3, { 'stroke-dasharray': '4 6' });
```
